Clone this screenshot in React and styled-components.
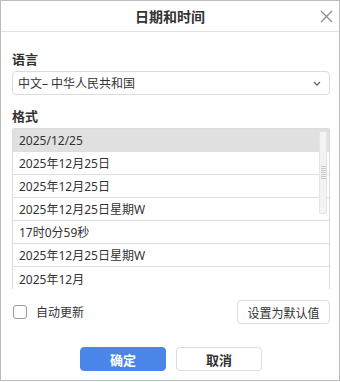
import styled, { createGlobalStyle } from "styled-components";

const Global = createGlobalStyle`
  html, body { margin: 0; padding: 0; background: #fff; }
  body { font-family: "Noto Sans", "Noto Sans CJK SC", sans-serif; color: #333; }
  * { box-sizing: border-box; }
`;

const Dialog = styled.div`
  width: 340px;
  height: 381px;
  border: 1px solid #bcbcbc;
  background: #fff;
  display: flex;
  flex-direction: column;
`;

const TitleBar = styled.div`
  position: relative;
  height: 31px;
  border-bottom: 1px solid #e2e2e2;
  display: flex;
  align-items: center;
  justify-content: center;
  font-size: 14px;
  font-weight: 700;
  color: #333;
`;

const Close = styled.button`
  position: absolute;
  right: 6px;
  top: 9px;
  width: 13px;
  height: 13px;
  padding: 0;
  border: none;
  background: none;
  display: flex;
`;

const Body = styled.div`
  padding: 18px 9px 0 11px;
  display: flex;
  flex-direction: column;
`;

const Label = styled.div`
  font-size: 13px;
  font-weight: 700;
  color: #333;
  line-height: 18px;
  margin-bottom: 3px;
`;

const Select = styled.div`
  height: 24px;
  border: 1px solid #dcdcdc;
  border-radius: 4px;
  display: flex;
  align-items: center;
  justify-content: space-between;
  padding: 0 8px 0 5px;
  font-size: 12px;
  color: #333;
  margin-bottom: 12px;
`;

const List = styled.div`
  position: relative;
  border: 1px solid #dcdcdc;
  border-radius: 2px;
  height: 162px;
`;

const Row = styled.div`
  height: 23px;
  display: flex;
  align-items: center;
  padding-left: 6px;
  font-size: 12px;
  color: #333;
  background: ${(p) => (p.$selected ? "#e0e0e0" : "#fff")};
  border-bottom: ${(p) => (p.$last ? "none" : "1px solid #dedede")};
`;

const Scroll = styled.div`
  position: absolute;
  right: 2px;
  top: 2px;
  width: 8px;
  height: 83px;
  background: #f3f3f3;
  border: 1px solid #e4e4e4;
  border-radius: 2px;
  display: flex;
  flex-direction: column;
  align-items: center;
  justify-content: center;
  gap: 1px;
`;

const Grip = styled.span`
  width: 5px;
  height: 1px;
  background: #c8c8c8;
`;

const Options = styled.div`
  display: flex;
  align-items: center;
  justify-content: space-between;
  margin-top: 10px;
`;

const CheckLabel = styled.label`
  display: flex;
  align-items: center;
  gap: 9px;
  font-size: 12px;
  color: #333;
`;

const Box = styled.span`
  width: 14px;
  height: 14px;
  border: 1px solid #999;
  border-radius: 3px;
  margin-left: 1px;
`;

const Btn = styled.button`
  height: 24px;
  width: ${(p) => p.$w}px;
  border: 1px solid ${(p) => (p.$primary ? "#4a86e8" : "#dcdcdc")};
  background: ${(p) => (p.$primary ? "#4a86e8" : "#fff")};
  color: ${(p) => (p.$primary ? "#fff" : "#333")};
  border-radius: 4px;
  font-family: "Noto Sans CJK SC", sans-serif;
  font-size: ${(p) => (p.$bold ? 13 : 12)}px;
  font-weight: ${(p) => (p.$bold ? 700 : 400)};
  padding: 0;
`;

const Footer = styled.div`
  display: flex;
  justify-content: center;
  gap: 10px;
  margin-top: 23px;
`;

const rows = [
  "2025/12/25",
  "2025年12月25日",
  "2025年12月25日",
  "2025年12月25日星期W",
  "17时0分59秒",
  "2025年12月25日星期W",
  "2025年12月",
];

export default function App() {
  return (
    <>
      <Global />
      <Dialog>
        <TitleBar>
          日期和时间
          <Close>
            <svg width="13" height="13" viewBox="0 0 13 13">
              <path d="M1 1L12 12M12 1L1 12" stroke="#8a8a8a" strokeWidth="1.2" />
            </svg>
          </Close>
        </TitleBar>
        <Body>
          <Label>语言</Label>
          <Select>
            <span>中文– 中华人民共和国</span>
            <svg width="8" height="5" viewBox="0 0 8 5">
              <path d="M1 1L4 4L7 1" stroke="#666" strokeWidth="1.3" fill="none" />
            </svg>
          </Select>
          <Label>格式</Label>
          <List>
            {rows.map((r, i) => (
              <Row key={i} $selected={i === 0} $last={i === rows.length - 1}>
                {r}
              </Row>
            ))}
            <Scroll>
              {Array.from({ length: 7 }).map((_, i) => (
                <Grip key={i} />
              ))}
            </Scroll>
          </List>
          <Options>
            <CheckLabel>
              <Box />
              自动更新
            </CheckLabel>
            <Btn $w={93}>设置为默认值</Btn>
          </Options>
          <Footer>
            <Btn $w={86} $primary $bold>确定</Btn>
            <Btn $w={86} $bold>取消</Btn>
          </Footer>
        </Body>
      </Dialog>
    </>
  );
}
